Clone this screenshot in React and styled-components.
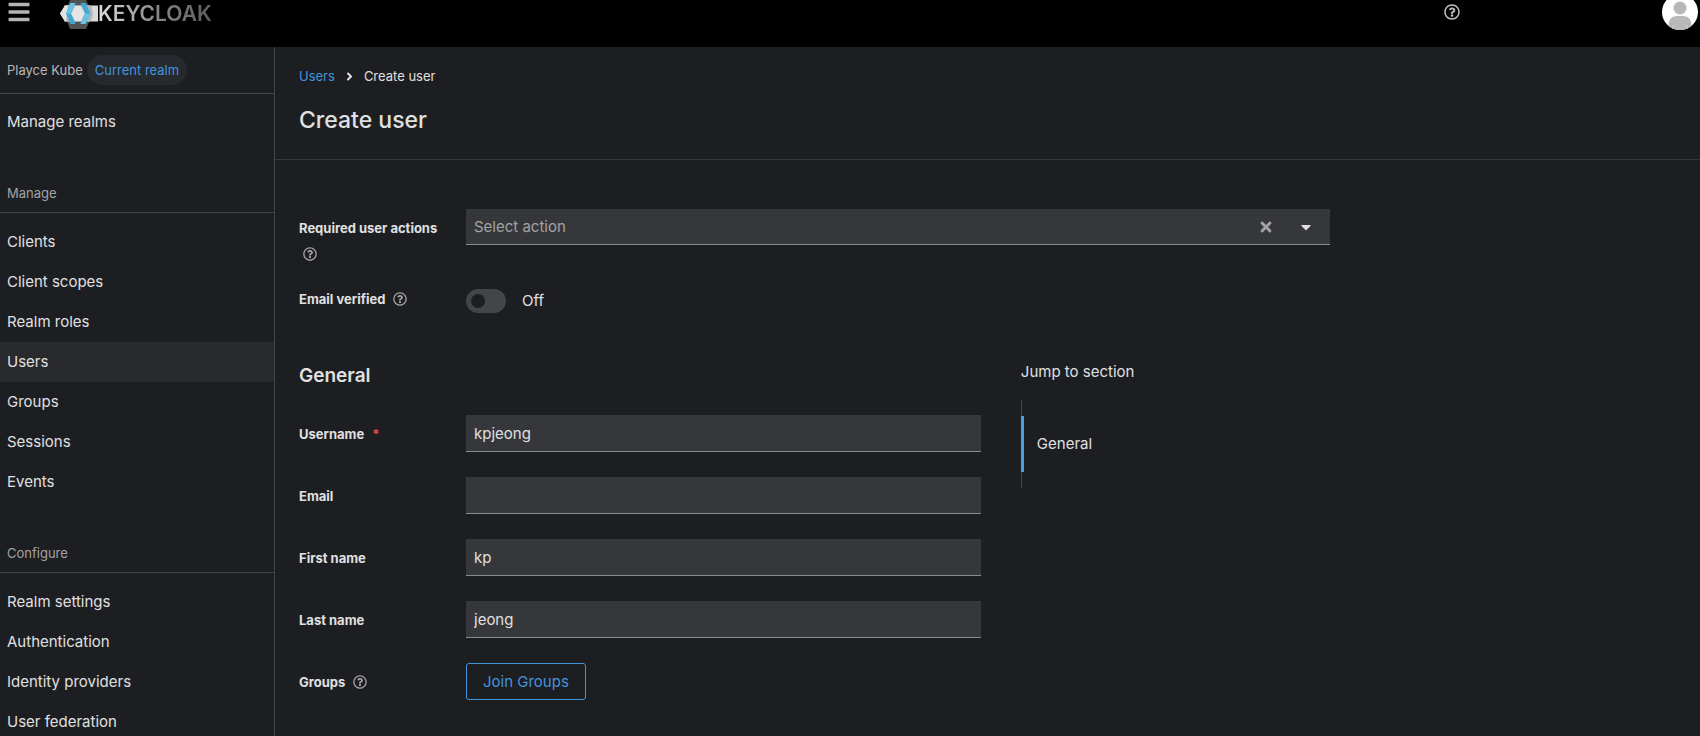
import React, { useState } from "react";
import styled, { createGlobalStyle } from "styled-components";
import {
  FaAngleRight,
  FaBars,
  FaCaretDown,
  FaRegQuestionCircle,
  FaTimes,
} from "react-icons/fa";

const color = {
  page: "#1d1e22",
  raised: "#292a2e",
  field: "#36373a",
  line: "#444548",
  rule: "#36373b",
  fieldLine: "#8a8b8e",
  text: "#e0e0e0",
  muted: "#a3a3a5",
  blue: "#4394dc",
  red: "#d9534a",
};

const GlobalStyle = createGlobalStyle`
  *, *::before, *::after { box-sizing: border-box; }
  body {
    margin: 0;
    background: ${color.page};
    color: ${color.text};
    font-family: Inter, "Open Sans", sans-serif;
    font-size: 15px;
    line-height: 24px;
  }
  button, input { font: inherit; color: inherit; }
  button { cursor: pointer; }
`;

const Page = styled.div`
  display: flex;
  flex-direction: column;
  height: 100vh;
  overflow: hidden;
`;

const Masthead = styled.header`
  flex: none;
  background: #000;
  padding: 0 2px 17px 7px;
  overflow: hidden;
`;

const MastheadBar = styled.div`
  display: flex;
  align-items: center;
  height: 36px;
  margin-top: -6px;
`;

const IconButton = styled.button`
  display: inline-flex;
  align-items: center;
  justify-content: center;
  flex: none;
  padding: 0;
  border: 0;
  background: none;
  color: ${(p) => p.$tone || color.muted};
  font-size: ${(p) => p.$size || 14}px;
`;

const Brand = styled.a`
  display: flex;
  align-items: center;
  margin-left: 29px;
  padding-top: 4px;
  text-decoration: none;
`;

const BrandName = styled.span`
  font-size: 21px;
  font-weight: 600;
  background: linear-gradient(90deg, #dcdcdc, #8a8a8a 50%, #5c5c5c);
  background-clip: text;
  -webkit-background-clip: text;
  color: transparent;
`;

const UserTools = styled.div`
  display: flex;
  align-items: center;
  gap: 202px;
  margin-left: auto;
`;

const Body = styled.div`
  display: flex;
  flex: 1;
  min-height: 0;
`;

const Sidebar = styled.nav`
  flex: none;
  width: 275px;
  border-right: 1px solid ${color.line};
  overflow: hidden;
`;

const Realm = styled.div`
  display: flex;
  align-items: center;
  gap: 4px;
  height: 47px;
  padding-left: 7px;
  margin-bottom: 8px;
  border-bottom: 1px solid ${color.line};
  font-size: 13px;
  color: #b8b8ba;
`;

const RealmBadge = styled.span`
  padding: 3px 8px;
  border-radius: 15px;
  background: #26292d;
  color: ${color.blue};
`;

const NavTitle = styled.h2`
  margin: 0 0 9px;
  padding: 40px 7px 8px;
  border-bottom: 1px solid ${color.line};
  font-size: 13px;
  font-weight: 400;
  line-height: 22px;
  color: ${color.muted};
`;

const NavList = styled.ul`
  margin: 0;
  padding: 0;
  list-style: none;
`;

const NavLink = styled.a`
  display: block;
  padding: 8px 7px;
  background: ${(p) => (p.$active ? color.raised : "transparent")};
  color: ${color.text};
  text-decoration: none;
`;

const Main = styled.main`
  flex: 1;
  min-width: 0;
  overflow: hidden;
`;

const PageHeader = styled.div`
  padding: 17px 24px 23px;
  border-bottom: 1px solid ${color.rule};
`;

const Breadcrumb = styled.nav`
  display: flex;
  align-items: center;
  gap: 8px;
  font-size: 13px;
`;

const BreadcrumbLink = styled.a`
  color: ${color.blue};
  text-decoration: none;
`;

const PageTitle = styled.h1`
  margin: 16px 0 0;
  font-size: 23px;
  font-weight: 500;
  line-height: 32px;
`;

const Form = styled.form`
  padding: 49px 24px 24px;
`;

const Fields = styled.div`
  display: flex;
  flex-direction: column;
  gap: ${(p) => (p.$wide ? 21 : 25)}px;
  max-width: ${(p) => (p.$wide ? "1031px" : "none")};
`;

const Field = styled.div`
  display: grid;
  grid-template-columns: 150px minmax(0, 1fr);
  column-gap: 17px;
`;

const FieldLabel = styled.div`
  display: flex;
  flex-wrap: wrap;
  align-items: center;
  align-content: flex-start;
  gap: 2px 4px;
  padding-top: ${(p) => (p.$flush ? 0 : 7)}px;
  font-size: 13px;
  font-weight: 700;

  ${IconButton} {
    height: 24px;
    padding: 0 4px;
  }
`;

const Required = styled.span`
  margin-left: 4px;
  color: ${color.red};
`;

const TextInput = styled.input`
  width: 100%;
  height: 37px;
  padding: 0 8px;
  border: 0;
  border-bottom: 1px solid ${color.fieldLine};
  border-radius: 0;
  background: ${color.field};
  outline-color: ${color.blue};
`;

const ActionSelect = styled.div`
  display: flex;
  align-items: center;
  gap: 24px;
  height: 36px;
  padding-right: 16px;
  border-bottom: 1px solid ${color.fieldLine};
  background: ${color.field};
`;

const SelectInput = styled.input`
  flex: 1;
  min-width: 0;
  height: 100%;
  padding: 0 8px;
  border: 0;
  background: none;
  outline: 0;

  &::placeholder {
    color: ${color.muted};
    opacity: 1;
  }
`;

const Switch = styled.label`
  display: flex;
  align-items: center;
  gap: 16px;
  width: max-content;
  height: 28px;
`;

const SwitchInput = styled.input`
  appearance: none;
  display: flex;
  align-items: center;
  width: 40px;
  height: 24px;
  margin: 0;
  padding: 0 5px;
  border-radius: 12px;
  background: ${(p) => (p.checked ? color.blue : "#444548")};

  &::before {
    content: "";
    width: 14px;
    height: 14px;
    margin-left: ${(p) => (p.checked ? "auto" : 0)};
    border-radius: 50%;
    background: ${color.page};
  }
`;

const Sections = styled.div`
  display: grid;
  grid-template-columns: minmax(0, 51fr) minmax(0, 49fr);
  gap: 40px;
  margin-top: 45px;
`;

const SectionTitle = styled.h2`
  margin: 0 0 23px;
  font-size: 19px;
  font-weight: 600;
  line-height: 32px;
`;

const JoinButton = styled.button`
  justify-self: start;
  height: 37px;
  padding: 0 16px;
  border: 1px solid ${color.blue};
  border-radius: 3px;
  background: none;
  color: ${color.blue};
`;

const JumpTitle = styled.div`
  margin-bottom: 16px;
`;

const JumpList = styled.ul`
  margin: 0;
  padding: 16px 0;
  border-left: 1px solid ${color.line};
  list-style: none;
`;

const JumpLink = styled.a`
  display: block;
  margin-left: -1px;
  padding: 16px 13px;
  border-left: 3px solid #4a9ee8;
  color: ${color.text};
  text-decoration: none;
`;

function Logo() {
  return (
    <svg width="38" height="32" viewBox="0 0 38 32" aria-hidden="true">
      <path d="M11 0H25L33 15.500L26 31H10L4 15.500Z" fill="#505254" />
      <path d="M5 7.500H38V23.500H5L0 15.500Z" fill="#dadada" />
      <path d="M4.500 7.500H31L33 15.500L31 23.500H4.500Z" fill="#b4b6b8" />
      <path d="M5 7.500H8L6 23.500H5L0 15.500Z" fill="#e2e2e2" />
      <path d="M15 8H21L25 15.500L21 23H15L11 15.500Z" fill="#e4e4e4" />
      <path d="M10.500 5H15.500L11 15.500L15.500 26H10.500L6 15.500Z" fill="#3fa9d4" />
      <path d="M10.500 5L6 15.500H11L15.500 5Z" fill="#66c3e6" />
      <path d="M20.500 5H25.500L30.500 15.500L25.500 26H20.500L25 15.500Z" fill="#3fa9d4" />
      <path d="M20.500 26H25.500L30.500 15.500H25Z" fill="#66c3e6" />
    </svg>
  );
}

function Avatar() {
  return (
    <svg width="36" height="36" viewBox="0 0 36 36" aria-hidden="true">
      <defs>
        <clipPath id="avatar-disc">
          <circle cx="18" cy="18" r="18" />
        </clipPath>
      </defs>
      <g clipPath="url(#avatar-disc)">
        <rect width="36" height="36" fill="#fff" />
        <circle cx="18" cy="14" r="6.500" fill="#b8b8b8" />
        <path d="M6.500 36V31Q7 22 15 22H21Q29 22 29.500 31V36Z" fill="#b8b8b8" />
        <path d="M11 31V36M25 31V36" stroke="#d2d2d2" strokeWidth="1" />
      </g>
    </svg>
  );
}

function HelpButton({ topic }) {
  return (
    <IconButton type="button" aria-label={`Help: ${topic}`}>
      <FaRegQuestionCircle />
    </IconButton>
  );
}

function NavItems({ items, active }) {
  return (
    <NavList>
      {items.map((item) => (
        <li key={item}>
          <NavLink
            href="#"
            $active={item === active}
            aria-current={item === active ? "page" : undefined}
          >
            {item}
          </NavLink>
        </li>
      ))}
    </NavList>
  );
}

function TextField({ id, label, value, required }) {
  return (
    <Field>
      <FieldLabel>
        <label htmlFor={id}>{label}</label>
        {required && <Required aria-hidden="true">*</Required>}
      </FieldLabel>
      <TextInput id={id} type="text" defaultValue={value} required={required} />
    </Field>
  );
}

export default function App() {
  const [verified, setVerified] = useState(false);

  return (
    <Page>
      <GlobalStyle />
      <Masthead>
        <MastheadBar>
          <IconButton type="button" aria-label="Toggle navigation" $size={24} $tone="#b4b4b4">
            <FaBars />
          </IconButton>
          <Brand href="#">
            <Logo />
            <BrandName>KEYCLOAK</BrandName>
          </Brand>
          <UserTools>
            <IconButton type="button" aria-label="Help" $size={16} $tone="#c0c0c0">
              <FaRegQuestionCircle />
            </IconButton>
            <IconButton type="button" aria-label="Account">
              <Avatar />
            </IconButton>
          </UserTools>
        </MastheadBar>
      </Masthead>

      <Body>
        <Sidebar aria-label="Main">
          <Realm>
            <span>Playce Kube</span>
            <RealmBadge>Current realm</RealmBadge>
          </Realm>
          <NavItems items={["Manage realms"]} />
          <NavTitle>Manage</NavTitle>
          <NavItems
            active="Users"
            items={[
              "Clients",
              "Client scopes",
              "Realm roles",
              "Users",
              "Groups",
              "Sessions",
              "Events",
            ]}
          />
          <NavTitle>Configure</NavTitle>
          <NavItems
            items={[
              "Realm settings",
              "Authentication",
              "Identity providers",
              "User federation",
            ]}
          />
        </Sidebar>

        <Main>
          <PageHeader>
            <Breadcrumb aria-label="Breadcrumb">
              <BreadcrumbLink href="#">Users</BreadcrumbLink>
              <FaAngleRight aria-hidden="true" />
              <span>Create user</span>
            </Breadcrumb>
            <PageTitle>Create user</PageTitle>
          </PageHeader>

          <Form onSubmit={(e) => e.preventDefault()}>
            <Fields $wide>
              <Field>
                <FieldLabel>
                  <label htmlFor="actions">Required user actions</label>
                  <HelpButton topic="Required user actions" />
                </FieldLabel>
                <ActionSelect>
                  <SelectInput
                    id="actions"
                    role="combobox"
                    aria-expanded="false"
                    placeholder="Select action"
                  />
                  <IconButton type="button" aria-label="Clear" $size={16}>
                    <FaTimes />
                  </IconButton>
                  <IconButton type="button" aria-label="Open actions" $size={16} $tone={color.text}>
                    <FaCaretDown />
                  </IconButton>
                </ActionSelect>
              </Field>
              <Field>
                <FieldLabel $flush>
                  <label htmlFor="verified">Email verified</label>
                  <HelpButton topic="Email verified" />
                </FieldLabel>
                <Switch>
                  <SwitchInput
                    id="verified"
                    type="checkbox"
                    role="switch"
                    checked={verified}
                    onChange={(e) => setVerified(e.target.checked)}
                  />
                  {verified ? "On" : "Off"}
                </Switch>
              </Field>
            </Fields>

            <Sections>
              <section>
                <SectionTitle>General</SectionTitle>
                <Fields>
                  <TextField id="username" label="Username" value="kpjeong" required />
                  <TextField id="email" label="Email" value="" />
                  <TextField id="first-name" label="First name" value="kp" />
                  <TextField id="last-name" label="Last name" value="jeong" />
                  <Field>
                    <FieldLabel>
                      <label htmlFor="groups">Groups</label>
                      <HelpButton topic="Groups" />
                    </FieldLabel>
                    <JoinButton type="button" id="groups">
                      Join Groups
                    </JoinButton>
                  </Field>
                </Fields>
              </section>
              <nav aria-label="Jump to section">
                <JumpTitle>Jump to section</JumpTitle>
                <JumpList>
                  <li>
                    <JumpLink href="#">General</JumpLink>
                  </li>
                </JumpList>
              </nav>
            </Sections>
          </Form>
        </Main>
      </Body>
    </Page>
  );
}
